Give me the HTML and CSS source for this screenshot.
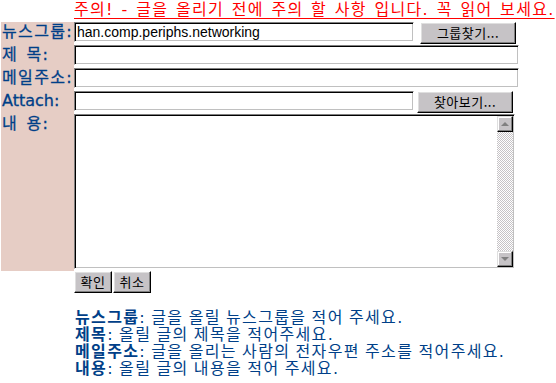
FILE: index.html
```html
<!DOCTYPE html>
<html lang="ko">
<head>
<meta charset="utf-8">
<title>글 올리기</title>
<link rel="stylesheet" href="styles.css">
</head>
<body>
<form class="post">
  <div class="notice">주의! - 글을 올리기 전에 주의 할 사항 입니다. 꼭 읽어 보세요.</div>

  <div class="label">뉴스그룹:</div>
  <div class="field">
    <input class="text short" type="text" value="han.comp.periphs.networking">
    <button type="button" class="btn find group">그룹찾기...</button>
  </div>

  <div class="label">제 목:</div>
  <div class="field"><input class="text long" type="text"></div>

  <div class="label">메일주소:</div>
  <div class="field"><input class="text long" type="text"></div>

  <div class="label latin">Attach:</div>
  <div class="field">
    <input class="text short" type="text">
    <button type="button" class="btn find attach">찾아보기...</button>
  </div>

  <div class="label memo-label">내 용:</div>
  <div class="field">
    <div class="memo">
      <textarea class="memo-text"></textarea>
      <div class="scrollbar">
        <div class="sb-btn"><span class="tri up"></span></div>
        <div class="sb-track"></div>
        <div class="sb-btn"><span class="tri down"></span></div>
      </div>
    </div>
  </div>

  <div class="actions">
    <button type="submit" class="btn small">확인</button><button type="reset" class="btn small">취소</button>
  </div>

  <div class="help">
    <p><b>뉴스그룹</b>: 글을 올릴 뉴스그룹을 적어 주세요.</p>
    <p><b>제목</b>: 올릴 글의 제목을 적어주세요.</p>
    <p><b>메일주소</b>: 글을 올리는 사람의 전자우편 주소를 적어주세요.</p>
    <p><b>내용</b>: 올릴 글의 내용을 적어 주세요.</p>
  </div>
</form>
</body>
</html>
```

FILE: styles.css
```css
html, body {
  margin: 0;
  padding: 0;
  background: #fff;
}

body {
  font-family: "DejaVu Sans", "Noto Sans CJK KR", sans-serif;
  font-size: 16px;
  color: #003f88;
}

.post {
  display: grid;
  grid-template-columns: 73px 482px;
  grid-template-rows: 22px 23px 23px 23px 23px 157px auto auto;
  margin-left: 1px;
}

.notice {
  grid-column: 2;
  color: #ff0000;
  white-space: nowrap;
  line-height: 20px;
  text-decoration: underline;
  text-underline-offset: 3px;
  letter-spacing: 1.3px;
  word-spacing: 1.3px;
}

.label {
  grid-column: 1;
  background: #e6cdc5;
  line-height: 20px;
  padding-left: 1px;
  white-space: nowrap;
  letter-spacing: 1.35px;
  word-spacing: 2px;
  -webkit-text-stroke: 0.3px #003f88;
}

.label.latin {
  letter-spacing: 0;
}

.field {
  grid-column: 2;
  display: flex;
  align-items: flex-start;
}

.text {
  box-sizing: border-box;
  height: 20px;
  margin: 0;
  padding: 0 2px;
  font-family: "Liberation Sans", sans-serif;
  font-size: 14px;
  color: #000;
  background: #fff;
  border: 1px solid;
  border-color: #808080 #fff #fff #808080;
  box-shadow: inset 1px 1px 0 #000, inset -1px -1px 0 #c0c0c0;
  outline: none;
}

.short { width: 340px; }
.long { width: 445px; }

.btn {
  box-sizing: border-box;
  height: 22px;
  margin: 0;
  padding: 0;
  font-family: "Noto Sans CJK KR", sans-serif;
  font-size: 13px;
  line-height: 18px;
  letter-spacing: 0.5px;
  color: #000;
  background: #c6c3c6;
  border: 1px solid;
  border-color: #fff #000 #000 #fff;
  box-shadow: inset -1px -1px 0 #808080, inset 1px 1px 0 #dfdfdf;
}

.find { width: 96px; }
.group { margin-left: 6px; }
.attach { margin-left: 3px; }

.memo {
  box-sizing: border-box;
  width: 441px;
  height: 155px;
  display: flex;
  border: 1px solid;
  border-color: #808080 #fff #fff #808080;
  box-shadow: inset 1px 1px 0 #000, inset -1px -1px 0 #c0c0c0;
  padding: 1px;
  background: #fff;
}

.memo-text {
  flex: 1;
  margin: 0;
  border: 0;
  padding: 0;
  resize: none;
  outline: none;
  background: transparent;
  font-family: "Liberation Sans", sans-serif;
  font-size: 14px;
}

.scrollbar {
  width: 16px;
  display: flex;
  flex-direction: column;
}

.sb-btn {
  box-sizing: border-box;
  height: 16px;
  background: #c6c3c6;
  border: 1px solid;
  border-color: #dfdfdf #000 #000 #dfdfdf;
  box-shadow: inset -1px -1px 0 #808080, inset 1px 1px 0 #fff;
  display: flex;
  align-items: center;
  justify-content: center;
}

.sb-track {
  flex: 1;
  background: repeating-conic-gradient(#c6c3c6 0 25%, #fff 0 50%) 0 0 / 2px 2px;
}

.tri {
  width: 0;
  height: 0;
  border-left: 4px solid transparent;
  border-right: 4px solid transparent;
}

.tri.up { border-bottom: 4px solid #808080; }
.tri.down { border-top: 4px solid #808080; }

.actions {
  grid-column: 2;
  display: flex;
  gap: 1px;
}

.small { width: 38px; }

.help {
  grid-column: 2;
  margin-top: 16px;
  padding-left: 1px;
  white-space: nowrap;
  letter-spacing: 1.35px;
  word-spacing: -1.2px;
}

.help p {
  margin: 0;
  line-height: 17px;
}

.help b {
  display: inline-block;
  line-height: 17px;
  font-weight: bold;
}
```
